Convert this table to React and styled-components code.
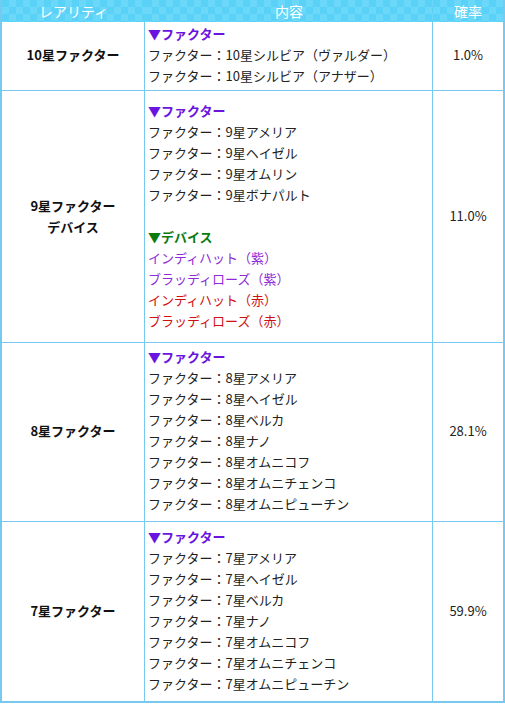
import React from "react";
import styled, { createGlobalStyle } from "styled-components";

const Global = createGlobalStyle`
  html, body { margin: 0; padding: 0; background: #ffffff; }
  body { font-family: "Noto Sans CJK JP", "Noto Sans", sans-serif; color: #222; }
`;

const Table = styled.table`
  width: 505px;
  table-layout: fixed;
  border-collapse: separate;
  border-spacing: 0;
  border-left: 2px solid #78c9f0;
  border-right: 2px solid #78c9f0;
  border-bottom: 2px solid #78c9f0;
  box-sizing: border-box;
  font-size: 13px;
  line-height: 21px;
`;

const HeadCell = styled.th`
  height: 22px;
  padding: 0;
  font-weight: normal;
  font-size: 14px;
  line-height: 22px;
  color: #ffffff;
  text-align: center;
  background-color: #5ad2f8;
  background-image:
    linear-gradient(45deg, rgba(255,255,255,0.10) 25%, transparent 25%, transparent 75%, rgba(255,255,255,0.10) 75%),
    linear-gradient(45deg, rgba(255,255,255,0.10) 25%, transparent 25%, transparent 75%, rgba(255,255,255,0.10) 75%);
  background-size: 14px 14px;
  background-position: 0 0, 7px 7px;
`;

const Cell = styled.td`
  box-sizing: border-box;
  border-top: ${(p) => (p.$first ? "none" : "1px solid #78c9f0")};
  border-right: ${(p) => (p.$last ? "none" : "1px solid #78c9f0")};
  padding: ${(p) => p.$pt}px 4px ${(p) => p.$pb}px 4px;
  vertical-align: middle;
`;

const RarityCell = styled(Cell)`
  text-align: center;
  font-weight: bold;
  color: #111;
  font-size: 13px;
`;

const RateCell = styled(Cell)`
  text-align: center;
  color: #222;
  font-size: 13px;
`;

const ContentCell = styled(Cell)`
  text-align: left;
  padding-left: 3px;
`;

const GroupTitle = styled.div`
  font-weight: bold;
  color: ${(p) => p.$color};
`;

const Item = styled.div`
  color: ${(p) => p.$color || "#222"};
  white-space: nowrap;
`;

const Spacer = styled.div`
  height: 21px;
`;

const rows = [
  {
    rarity: ["10星ファクター"],
    rate: "1.0%",
    pt: 1,
    pb: 4,
    groups: [
      {
        title: "▼ファクター",
        color: "#6a14e0",
        items: [
          { t: "ファクター：10星シルビア（ヴァルダー）" },
          { t: "ファクター：10星シルビア（アナザー）" },
        ],
      },
    ],
  },
  {
    rarity: ["9星ファクター", "デバイス"],
    rate: "11.0%",
    pt: 9,
    pb: 11,
    groups: [
      {
        title: "▼ファクター",
        color: "#6a14e0",
        items: [
          { t: "ファクター：9星アメリア" },
          { t: "ファクター：9星ヘイゼル" },
          { t: "ファクター：9星オムリン" },
          { t: "ファクター：9星ボナパルト" },
        ],
      },
      {
        title: "▼デバイス",
        color: "#0d7a0d",
        items: [
          { t: "インディハット（紫）", c: "#8e2bd6" },
          { t: "ブラッディローズ（紫）", c: "#8e2bd6" },
          { t: "インディハット（赤）", c: "#d01010" },
          { t: "ブラッディローズ（赤）", c: "#d01010" },
        ],
      },
    ],
  },
  {
    rarity: ["8星ファクター"],
    rate: "28.1%",
    pt: 3,
    pb: 7,
    groups: [
      {
        title: "▼ファクター",
        color: "#6a14e0",
        items: [
          { t: "ファクター：8星アメリア" },
          { t: "ファクター：8星ヘイゼル" },
          { t: "ファクター：8星ベルカ" },
          { t: "ファクター：8星ナノ" },
          { t: "ファクター：8星オムニコフ" },
          { t: "ファクター：8星オムニチェンコ" },
          { t: "ファクター：8星オムニピューチン" },
        ],
      },
    ],
  },
  {
    rarity: ["7星ファクター"],
    rate: "59.9%",
    pt: 4,
    pb: 7,
    groups: [
      {
        title: "▼ファクター",
        color: "#6a14e0",
        items: [
          { t: "ファクター：7星アメリア" },
          { t: "ファクター：7星ヘイゼル" },
          { t: "ファクター：7星ベルカ" },
          { t: "ファクター：7星ナノ" },
          { t: "ファクター：7星オムニコフ" },
          { t: "ファクター：7星オムニチェンコ" },
          { t: "ファクター：7星オムニピューチン" },
        ],
      },
    ],
  },
];

export default function App() {
  return (
    <>
      <Global />
      <Table>
        <colgroup>
          <col style={{ width: 143 }} />
          <col style={{ width: 288 }} />
          <col style={{ width: 70 }} />
        </colgroup>
        <thead>
          <tr>
            <HeadCell>レアリティ</HeadCell>
            <HeadCell>内容</HeadCell>
            <HeadCell>確率</HeadCell>
          </tr>
        </thead>
        <tbody>
          {rows.map((r, i) => (
            <tr key={i}>
              <RarityCell $first={i === 0} $pt={r.pt} $pb={r.pb}>
                {r.rarity.map((l) => (
                  <div key={l}>{l}</div>
                ))}
              </RarityCell>
              <ContentCell $first={i === 0} $pt={r.pt} $pb={r.pb}>
                {r.groups.map((g, gi) => (
                  <React.Fragment key={gi}>
                    {gi > 0 && <Spacer />}
                    <GroupTitle $color={g.color}>{g.title}</GroupTitle>
                    {g.items.map((it) => (
                      <Item key={it.t} $color={it.c}>
                        {it.t}
                      </Item>
                    ))}
                  </React.Fragment>
                ))}
              </ContentCell>
              <RateCell $first={i === 0} $last $pt={r.pt} $pb={r.pb}>
                {r.rate}
              </RateCell>
            </tr>
          ))}
        </tbody>
      </Table>
    </>
  );
}
